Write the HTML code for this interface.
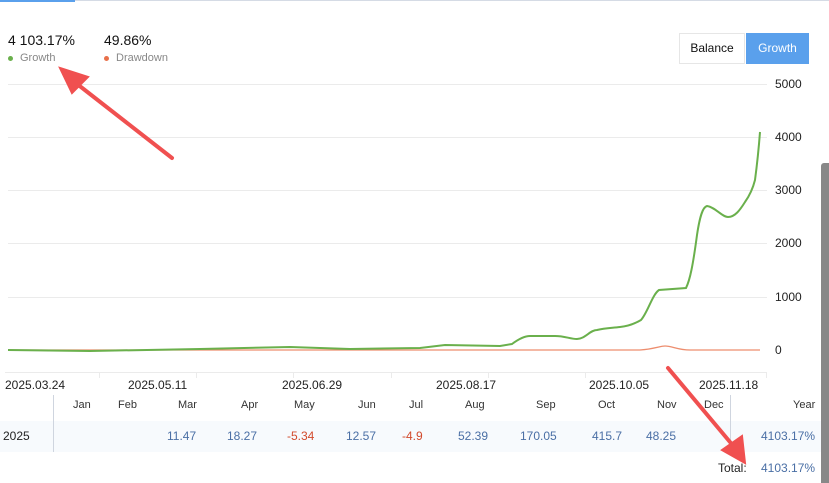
<!DOCTYPE html>
<html><head><style>
body{margin:0;width:829px;height:483px;background:#fff;font-family:"Liberation Sans",sans-serif;position:relative;overflow:hidden}
.a{position:absolute;white-space:nowrap}
.t{font-size:12px;color:#222}
.b{color:#4a6fa5}.r{color:#d24a2c}
</style></head><body>
<div class="a" style="left:0;top:0;width:829px;height:1px;background:#d5dbe5"></div>
<div class="a" style="left:0;top:0;width:75px;height:2px;background:#5aa0ec"></div>
<div class="a" style="left:8px;top:32px;font-size:14px;color:#111">4 103.17%</div>
<div class="a" style="left:104px;top:32px;font-size:14px;color:#111">49.86%</div>
<div class="a" style="left:8px;top:52px;font-size:11px;color:#888"><span style="display:inline-block;width:5px;height:5px;border-radius:50%;background:#6ab04c;margin-right:7px;vertical-align:middle"></span>Growth</div>
<div class="a" style="left:104px;top:52px;font-size:11px;color:#888"><span style="display:inline-block;width:5px;height:5px;border-radius:50%;background:#e8704a;margin-right:7px;vertical-align:middle"></span>Drawdown</div>
<div class="a" style="left:679px;top:33px;width:66px;height:31px;border:1px solid #e6e6e6;box-sizing:border-box;font-size:12px;line-height:29px;text-align:center;color:#111">Balance</div>
<div class="a" style="left:746px;top:33px;width:63px;height:31px;background:#5aa0ec;font-size:12px;line-height:31px;text-align:center;color:#fff">Growth</div>
<div class="a" style="left:0;top:421px;width:821px;height:31px;background:#f7fafd"></div>
<svg class="a" style="left:0;top:0" width="829" height="483">
<g stroke="#ebebeb" stroke-width="1">
<line x1="8" y1="84.5" x2="767" y2="84.5"/><line x1="8" y1="137.5" x2="767" y2="137.5"/><line x1="8" y1="190.5" x2="767" y2="190.5"/><line x1="8" y1="243.5" x2="767" y2="243.5"/><line x1="8" y1="297.5" x2="767" y2="297.5"/>
<line x1="5" y1="372.5" x2="767" y2="372.5"/>
<line x1="99.5" y1="372" x2="99.5" y2="378"/><line x1="196.5" y1="372" x2="196.5" y2="378"/><line x1="293.5" y1="372" x2="293.5" y2="378"/><line x1="391.5" y1="372" x2="391.5" y2="378"/><line x1="488.5" y1="372" x2="488.5" y2="378"/><line x1="585.5" y1="372" x2="585.5" y2="378"/><line x1="766.5" y1="372" x2="766.5" y2="378"/>
</g>
<path d="M8,350 L640,350 C655,349 660,346 665,346 C672,346 678,350 690,350 L760,350" fill="none" stroke="#e8704a" stroke-width="1.3" opacity=".8"/>
<path d="M8,350 L90,351 L200,349 L290,347 L350,349 L420,348 L445,345 L500,346 L512,344 C520,338 525,336 530,336 L555,336 C565,336 570,339 577,339 C585,339 590,330 597,330 C605,328 612,328 620,327 C630,326 636,323 641,320 C648,312 652,295 659,290 L686,288 C690,280 693,265 697,235 C700,215 703,207 707,206 C715,207 722,217 728,217 C735,217 740,210 745,202 C750,195 753,188 755,180 C757,165 759,145 760,132" fill="none" stroke="#6ab04c" stroke-width="2"/>
<line x1="53.5" y1="395" x2="53.5" y2="452" stroke="#cfd5df"/>
<line x1="730.5" y1="395" x2="730.5" y2="452" stroke="#cfd5df"/>
</svg>
<div class="a t" style="left:775px;top:77px">5000</div>
<div class="a t" style="left:775px;top:130px">4000</div>
<div class="a t" style="left:775px;top:183px">3000</div>
<div class="a t" style="left:775px;top:236px">2000</div>
<div class="a t" style="left:775px;top:290px">1000</div>
<div class="a t" style="left:775px;top:343px">0</div>
<div class="a t" style="left:5px;top:378px">2025.03.24</div>
<div class="a t" style="left:128px;top:378px">2025.05.11</div>
<div class="a t" style="left:282px;top:378px">2025.06.29</div>
<div class="a t" style="left:436px;top:378px">2025.08.17</div>
<div class="a t" style="left:589px;top:378px">2025.10.05</div>
<div class="a t" style="left:699px;top:378px">2025.11.18</div>
<div style="position:absolute;left:0;top:399px;font-size:11px;color:#333">
<span class="a" style="left:73px">Jan</span><span class="a" style="left:118px">Feb</span><span class="a" style="left:178px">Mar</span><span class="a" style="left:241px">Apr</span><span class="a" style="left:294px">May</span><span class="a" style="left:358px">Jun</span><span class="a" style="left:409px">Jul</span><span class="a" style="left:465px">Aug</span><span class="a" style="left:536px">Sep</span><span class="a" style="left:598px">Oct</span><span class="a" style="left:657px">Nov</span><span class="a" style="left:704px">Dec</span><span class="a" style="left:793px">Year</span>
</div>
<div style="position:absolute;left:0;top:429px;font-size:12px">
<span class="a" style="left:3px;color:#222">2025</span>
<span class="a b" style="left:167px">11.47</span><span class="a b" style="left:227px">18.27</span><span class="a r" style="left:287px">-5.34</span><span class="a b" style="left:346px">12.57</span><span class="a r" style="left:402px">-4.9</span><span class="a b" style="left:458px">52.39</span><span class="a b" style="left:520px">170.05</span><span class="a b" style="left:592px">415.7</span><span class="a b" style="left:646px">48.25</span><span class="a b" style="left:761px">4103.17%</span>
</div>
<div class="a" style="left:718px;top:461px;font-size:12px;color:#222">Total:</div>
<div class="a b" style="left:761px;top:461px;font-size:12px">4103.17%</div>
<svg class="a" style="left:0;top:0" width="829" height="483">
<g fill="#f05050" stroke="#f05050" stroke-linecap="round">
<line x1="172" y1="158" x2="72" y2="80" stroke-width="4"/>
<polygon points="60,68 88,77 72,93" stroke-width="2"/>
<line x1="668" y1="368" x2="735" y2="448" stroke-width="4"/>
<polygon points="745,463 722,450 742,436" stroke-width="2"/>
</g>
</svg>
<div class="a" style="left:821px;top:163px;width:8px;height:320px;background:#888;border-radius:3px 0 0 0"></div>
</body></html>
